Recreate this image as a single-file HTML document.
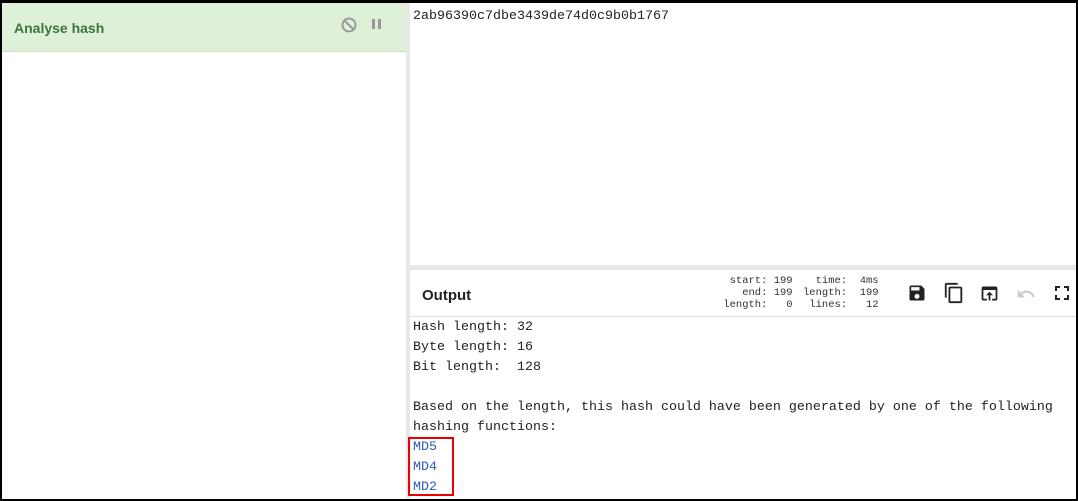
<!DOCTYPE html>
<html><head><style>
*{margin:0;padding:0;box-sizing:border-box}
body{width:1078px;height:501px;background:#fff;position:relative;overflow:hidden;font-family:"Liberation Sans",sans-serif}
.frame{position:absolute;left:0;top:0;width:1078px;height:501px;border:2px solid #000;border-top-width:3px;border-bottom-width:2px}
.left{position:absolute;left:2px;top:3px;width:404px;height:496px;background:#fff}
.lh{height:49px;background:#dff0d8;border-bottom:1px solid #c8e2c0;position:relative}
.lh span{position:absolute;left:12px;top:17px;font-weight:bold;font-size:14px;color:#3c763d}
.div{position:absolute;left:406px;top:3px;width:4px;height:496px;background:#e8e8e8}
.mono{font-family:"Liberation Mono",monospace;font-size:13.33px;color:#222}
.in{position:absolute;left:413px;top:9px}
.hdiv{position:absolute;left:410px;top:265px;width:666px;height:5px;background:#e8e8e8}
.oh{position:absolute;left:410px;top:270px;width:666px;height:47px;border-bottom:1px solid #ddd}
.oh b{position:absolute;left:12px;top:17px;font-size:15px;color:#222}
.st{position:absolute;font-family:"Liberation Mono",monospace;font-size:10.5px;line-height:12px;color:#333;white-space:pre;top:5px}
.out{position:absolute;left:413px;top:318px;line-height:20px;white-space:pre}
.box{position:absolute;left:408px;top:437px;width:46px;height:59px;border:2px solid #e00}
</style></head><body>
<div class="left"><div class="lh"><span>Analyse hash</span>
<svg style="position:absolute;left:339px;top:14px" width="16" height="16" viewBox="0 0 16 16"><circle cx="8" cy="8" r="6.5" fill="none" stroke="#999" stroke-width="2"/><line x1="3.5" y1="3.5" x2="12.5" y2="12.5" stroke="#999" stroke-width="2"/></svg>
<svg style="position:absolute;left:369px;top:15px" width="12" height="12"><rect x="1" y="1" width="3" height="10" fill="#999"/><rect x="7" y="1" width="3" height="10" fill="#999"/></svg>
</div></div>
<div class="div"></div>
<div class="mono in">2ab96390c7dbe3439de74d0c9b0b1767</div>
<div class="hdiv"></div>
<div class="oh"><b>Output</b>
<div class="st" style="left:307px">  start: 199
    end: 199
 length:   0</div>
<div class="st" style="left:393px">  time:  4ms
length:  199
 lines:   12</div>
<svg style="position:absolute;left:497px;top:13px" width="20" height="20" viewBox="0 0 24 24"><path d="M17 3H5a2 2 0 0 0-2 2v14a2 2 0 0 0 2 2h14a2 2 0 0 0 2-2V7l-4-4zm-5 16a3 3 0 1 1 0-6 3 3 0 0 1 0 6zm3-10H5V5h10v4z" fill="#222"/></svg>
<svg style="position:absolute;left:533px;top:12px" width="22" height="22" viewBox="0 0 24 24"><path d="M16 1H4a2 2 0 0 0-2 2v14h2V3h12V1zm3 4H8a2 2 0 0 0-2 2v14a2 2 0 0 0 2 2h11a2 2 0 0 0 2-2V7a2 2 0 0 0-2-2zm0 16H8V7h11v14z" fill="#222"/></svg>
<svg style="position:absolute;left:569px;top:13px" width="21" height="21" viewBox="0 0 24 24"><path d="M19 4H5a2 2 0 0 0-2 2v12a2 2 0 0 0 2 2h4v-2H5V8h14v10h-4v2h4a2 2 0 0 0 2-2V6a2 2 0 0 0-2-2zm-7 6l-4 4h3v6h2v-6h3l-4-4z" fill="#222"/></svg>
<svg style="position:absolute;left:606px;top:14px" width="20" height="20" viewBox="0 0 24 24"><path d="M12.5 8c-2.65 0-5.050 1-6.9 2.6L2 7v9h9l-3.6-3.6c1.4-1.2 3.2-1.9 5.1-1.9 3.5 0 6.5 2.3 7.6 5.5l2.4-.8C21 11 17.1 8 12.5 8z" fill="#ccc"/></svg>
<svg style="position:absolute;left:645px;top:16px" width="14" height="14" viewBox="0 0 14 14"><path d="M1 5V1h4M9 1h4v4M13 9v4H9M5 13H1V9" fill="none" stroke="#222" stroke-width="2"/></svg>
</div>
<div class="mono out">Hash length: 32
Byte length: 16
Bit length:  128

Based on the length, this hash could have been generated by one of the following
hashing functions:
<span style="color:#2a5db0">MD5
MD4
MD2</span></div>
<div class="box"></div>
<div class="frame"></div>
</body></html>
